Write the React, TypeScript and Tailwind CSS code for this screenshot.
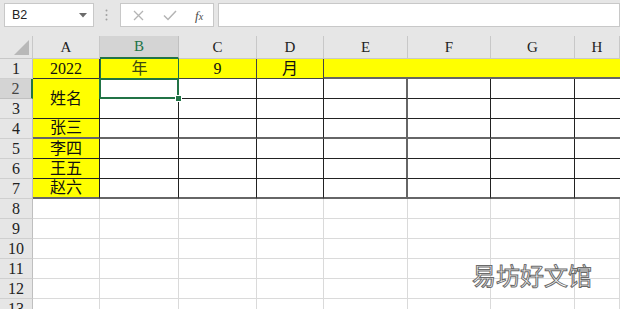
import React from 'react';

const serif = "font-['Liberation_Serif','Noto_Sans_CJK_SC',serif]";

function Toolbar() {
  return (
    <div className="h-[36px] bg-[#e6e6e6] flex items-start pt-[3px] pl-[4px]">
      <div className="w-[91px] h-[24px] bg-white border border-[#c8c8c8] flex items-center pl-[7px] pr-[6px] font-['Liberation_Sans',sans-serif] text-[12.5px] text-[#222]">
        <span className="flex-1">B2</span>
        <svg width="8" height="5" viewBox="0 0 8 5">
          <path d="M0 0 L8 0 L4 4.5 Z" fill="#6b6b6b" />
        </svg>
      </div>
      <div className="w-[27px] h-[24px] flex items-center justify-center">
        <svg width="3" height="12" viewBox="0 0 3 12">
          <circle cx="1.5" cy="1.5" r="1" fill="#a0a0a0" />
          <circle cx="1.5" cy="6" r="1" fill="#a0a0a0" />
          <circle cx="1.5" cy="10.5" r="1" fill="#a0a0a0" />
        </svg>
      </div>
      <div className="w-[96px] h-[24px] bg-white border border-[#c8c8c8] flex items-center">
        <div className="w-[34px] flex justify-center pl-[2px]">
          <svg width="11" height="11" viewBox="0 0 11 11">
            <path d="M1 1 L10 10 M10 1 L1 10" stroke="#b4b4b4" strokeWidth="1.3" />
          </svg>
        </div>
        <div className="w-[30px] flex justify-center">
          <svg width="14" height="11" viewBox="0 0 14 11">
            <path d="M1 5.5 L5 9.5 L13 1" stroke="#b4b4b4" strokeWidth="1.5" fill="none" />
          </svg>
        </div>
        <div className={`flex-1 flex justify-center ${serif} italic text-[#4a4a4a] text-[13px] leading-none`}>
          <span>f</span>
          <span className="text-[10px] mt-[3px]">x</span>
        </div>
      </div>
      <div className="ml-[4px] w-[410px] h-[24px] bg-white border border-[#c8c8c8]" />
    </div>
  );
}

const cols = ['A', 'B', 'C', 'D', 'E', 'F', 'G', 'H'];

function ColHeader({ label }: { label: string }) {
  if (label === 'B') {
    return (
      <div className="bg-[#d4d4d4] border-r border-[#c0c0c0] border-b-2 border-b-[#217346] flex items-center justify-center text-[15px] text-[#217346]">
        {label}
      </div>
    );
  }
  return (
    <div className="bg-[#e6e6e6] border-r border-[#c8c8c8] border-b border-b-[#c8c8c8] flex items-center justify-center text-[15px] text-[#222]">
      {label}
    </div>
  );
}

function RowHeader({ n }: { n: number }) {
  if (n === 2) {
    return (
      <div className="bg-[#d4d4d4] border-r-2 border-r-[#217346] border-b border-b-[#c0c0c0] flex items-center justify-center text-[16px] text-[#444]">
        {n}
      </div>
    );
  }
  return (
    <div className="bg-[#e6e6e6] border-r border-r-[#bfbfbf] border-b border-b-[#cfcfcf] flex items-center justify-center text-[16px] text-[#222]">
      {n}
    </div>
  );
}

const names = ['张三', '李四', '王五', '赵六'];

export default function App() {
  const tableRows = [2, 3, 4, 5, 6, 7];
  const emptyRows = [8, 9, 10, 11, 12, 13];

  return (
    <div className={`w-[620px] h-[309px] overflow-hidden relative bg-white ${serif}`}>
      <Toolbar />
      <div className="grid grid-cols-[33px_67px_79px_78px_67px_84px_83px_84px_45px] grid-rows-[23px_repeat(13,20px)]">
        {/* header row */}
        <div className="bg-[#e6e6e6] border-r border-[#c8c8c8] border-b border-b-[#c8c8c8] flex items-end justify-end pr-[3px] pb-[3px]">
          <svg width="15" height="15" viewBox="0 0 15 15">
            <path d="M15 0 L15 15 L0 15 Z" fill="#b8b8b8" />
          </svg>
        </div>
        {cols.map((c) => (
          <ColHeader key={c} label={c} />
        ))}

        {/* row 1 */}
        <RowHeader n={1} />
        <div className="bg-[#ffff00] border-r border-[#333] border-b border-b-[#333] flex items-center justify-center text-[16px] text-[#111]">
          2022
        </div>
        <div className="bg-[#ffff00] border-x border-[#217346] border-b border-b-[#555] flex items-center justify-center text-[16px] text-[#3d4a10]">
          年
        </div>
        <div className="bg-[#ffff00] border-r border-[#444] border-b border-b-[#444] flex items-center justify-center text-[16px] text-[#111]">
          9
        </div>
        <div className="bg-[#ffff00] border-r border-[#444] border-b border-b-[#444] flex items-center justify-center text-[16px] text-[#111]">
          月
        </div>
        <div className="col-span-4 bg-[#ffff00] border-b-2 border-b-[#666]" />

        {/* rows 2-7 */}
        {tableRows.map((r) => {
          const thick = r === 4 || r === 7;
          return (
            <React.Fragment key={r}>
              <RowHeader n={r} />
              {r === 2 && (
                <div className="row-span-2 bg-[#ffff00] border-r border-[#222] border-b border-b-[#222] flex items-center justify-center text-[16px] text-[#111]">
                  姓名
                </div>
              )}
              {r >= 4 && (
                <div
                  className={
                    thick
                      ? 'bg-[#ffff00] border-r border-[#222] border-b-2 border-b-[#666] flex items-center justify-center text-[16px] text-[#111]'
                      : 'bg-[#ffff00] border-r border-[#222] border-b border-b-[#222] flex items-center justify-center text-[16px] text-[#111]'
                  }
                >
                  {names[r - 4]}
                </div>
              )}
              {cols.slice(1).map((c) => {
                const base = thick
                  ? 'border-b-2 border-b-[#666]'
                  : 'border-b border-b-[#222]';
                const right =
                  c === 'E'
                    ? 'border-r-2 border-r-[#666]'
                    : c === 'H'
                      ? ''
                      : 'border-r border-r-[#222]';
                if (c === 'B' && r === 2) {
                  return (
                    <div key={c} className={`relative ${base} ${right}`}>
                      <div className="absolute -top-[1px] -left-[1px] -right-[1px] -bottom-[1px] border-2 border-[#217346] z-10" />
                      <div className="absolute -right-[4px] -bottom-[4px] w-[7px] h-[7px] bg-[#217346] border border-white z-20" />
                    </div>
                  );
                }
                return <div key={c} className={`${base} ${right}`} />;
              })}
            </React.Fragment>
          );
        })}

        {/* rows 8+ */}
        {emptyRows.map((r) => (
          <React.Fragment key={r}>
            <RowHeader n={r} />
            {cols.map((c) => (
              <div key={c} className="border-r border-r-[#dadada] border-b border-b-[#dadada]" />
            ))}
          </React.Fragment>
        ))}
      </div>

      <div className="absolute left-[472px] top-[263px] font-['Noto_Sans_CJK_SC',sans-serif] text-[24px] leading-none text-white [-webkit-text-stroke:1px_#6a6a6a]">
        易坊好文馆
      </div>
    </div>
  );
}
